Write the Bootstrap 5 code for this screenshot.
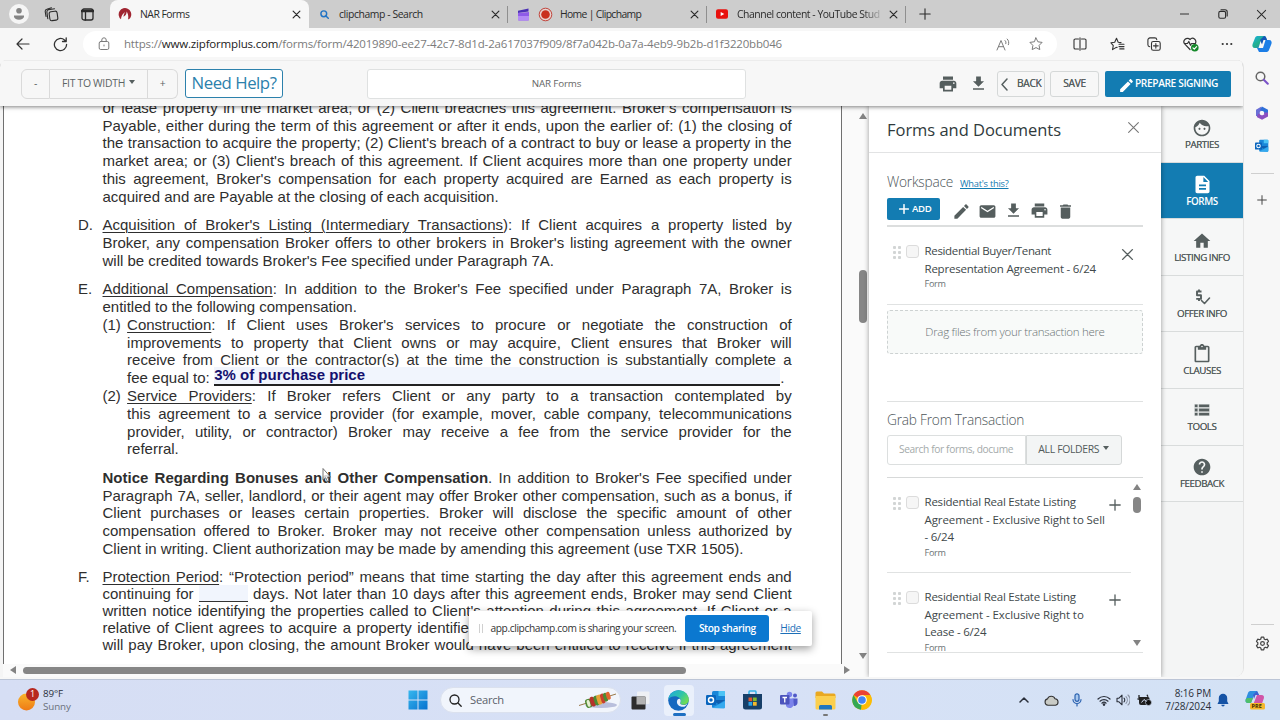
<!DOCTYPE html>
<html lang="en">
<head>
<meta charset="utf-8">
<meta name="viewport" content="width=device-width, initial-scale=1">
<title>NAR Forms</title>
<link href="https://cdn.jsdelivr.net/npm/bootstrap@5.3.0/dist/css/bootstrap.min.css" rel="stylesheet">
<style>
body{width:1280px;height:720px;overflow:hidden;font-family:"Open Sans","Noto Sans",sans-serif;font-size:10.4px;line-height:1.2;color:#333;background:#f7f7f7;white-space:nowrap}
svg{display:block;flex:none}
.ln{fill:none;stroke:currentColor;stroke-linecap:round;stroke-linejoin:round}
.cells{display:grid;align-items:center}
.cells>*{justify-self:center}
.cells>.fill{justify-self:stretch;height:100%}
.cells>.start{justify-self:start}
/* tab strip */
.tabstrip{height:28px;background:#cdcdcd;color:#2b2b2b;grid-template-columns:38px 27px 45px 199px 199px 199px 199px 37px 1fr 39px 38px 38px}
.btab{display:grid;align-items:center;grid-template-columns:30px 1fr 26px;font-size:10.4px;letter-spacing:-.42px}
.btab>svg{justify-self:center}
.btab.on{background:#f7f7f7;border-radius:8px 8px 0 0}
.btab.sep{background:linear-gradient(#8f8f8f,#8f8f8f) right 6px/1px 17px no-repeat}
.btab.rec{grid-template-columns:26px 26px 1fr 26px}
.fade-end{-webkit-mask-image:linear-gradient(90deg,#000 88%,rgba(0,0,0,.2))}
/* address row */
.addr{height:32px;background:#f7f7f7;color:#333;grid-template-columns:45px 30px 8px 974px 45px 37px 36px 37px 36px 1fr}
.pill{background:#fff;border-radius:13px;display:grid;align-items:center;grid-template-columns:41px 862px 34px 32px;font-size:11.5px;letter-spacing:-.178px;color:#7b7b7b}
.cells>.pill{height:26px}
.pill b{font-weight:400;color:#222}
.pill>svg{justify-self:center}
/* application */
.stage{height:617px}
.app{width:1244px;border-radius:7px 7px 9px 0;overflow:hidden;background:#f5f5f5;border-right:1px solid #e3e3e3}
.tool{height:46px;background:#f7f7f7;box-shadow:0 1px 4px rgba(0,0,0,.5);z-index:3;border-top:1px solid #ececec;padding-left:21px;color:#5a6363}
.zb{height:30px;border:1px solid #dadada;background:#f7f7f7;display:flex;align-items:center;justify-content:center;letter-spacing:-.3px;color:#5c6464}
.zb+.zb{border-left:0}
.help{width:98px;height:29px;border:1.5px solid #2c81ac;border-radius:3px;color:#2c81ac;background:#fff;font-size:16.8px;letter-spacing:-.48px;margin-left:7px}
.fname{width:379px;height:30px;border:1px solid #dfe1e1;border-radius:3px;background:#fff;font-size:9.8px;letter-spacing:-.16px;margin-left:84px;color:#666}
.sm-btn{height:26px;border:1px solid #d5d8d8;border-radius:3px;font-size:10.2px;letter-spacing:-.3px;color:#565f5f;text-shadow:0 0 .4px #565f5f}
.blue{background:#137cb2;color:#fff;font-weight:600;border-radius:2px}
/* document */
.docwrap{margin-left:3px;width:866px;flex:none;background:#fafafa}
.sheet{width:838.5px;height:558px;background:#fff;border-left:1px solid #707070;border-right:1.5px solid #707070;overflow:hidden;font-family:"Liberation Sans",Arial,sans-serif;font-size:15px;line-height:17.8px;color:#2e2e2e;padding-left:74px}
.blk{display:grid;grid-template-columns:24.5px 689.2px;width:714px;margin-bottom:10.65px}
.blk.first{margin-top:-7.2px}
.blk.tight{line-height:17px;margin-top:-.6px}
.sub{display:grid;grid-template-columns:24.6px 664.6px}
.j{text-align:justify;text-align-last:justify;white-space:normal;height:17.8px}
.tight .j{height:17px}
.l{height:17.8px}
u{text-decoration-thickness:1px;text-underline-offset:2px}
.field{width:566px;height:18.6px;margin:-2px 0 0 4.5px;background:#f1f5fd;border-bottom:2px solid #222;font-weight:700;color:#14106e;line-height:16px}
.mini{display:inline-block;width:49px;height:17px;background:#f1f5fd;border-bottom:1px solid #333;vertical-align:-3px}
.thumb{background:#868686;border-radius:4px}
.vsb{width:26px;height:558px}
.tri{width:0;height:0}
.tri.up{border:4.5px solid transparent;border-top:0;border-bottom:6px solid #838383}
.tri.dn{border:4.5px solid transparent;border-bottom:0;border-top:6px solid #838383}
.tri.lf{border:4.5px solid transparent;border-left:0;border-right:6px solid #838383}
.tri.rt{border:4.5px solid transparent;border-right:0;border-left:6px solid #838383}
.caret{border:3px solid transparent;border-top:4px solid #565f5f;border-bottom:0}
/* side panel */
.side{width:292px;flex:none;background:#fff;box-shadow:0 0 5px rgba(0,0,0,.4);z-index:1}
.side-head{height:46.5px;border-bottom:1px solid #e2e3e4;padding:2px 21.5px 0 18px;font-size:16.5px;letter-spacing:-.03px;color:#2f3a3c}
.inner{padding:0 18px}
.h-light{font-weight:300;font-size:13.7px;letter-spacing:-.22px;color:#4c5558;line-height:18px}
.addb{width:52.5px;height:22px;font-size:9.6px;letter-spacing:-.35px}
.ico{color:#555e5e}
.entry{display:grid;grid-template-columns:19px 18.5px 1fr auto;font-size:11.5px;letter-spacing:-.22px;line-height:17.7px;color:#40484a;width:256px}
.entry .f{font-size:9.1px;line-height:13px;color:#6a7274;letter-spacing:-.3px}
.entry .wide{letter-spacing:-.09px}
.entry .slim{letter-spacing:-.34px}
.box{width:13px;height:13px;border:1px solid #dcdcdc;border-radius:3px;background:#f6f6f6;margin-top:2.5px}
.dots{width:9px;height:14px;margin:2.5px 0 0 5px;background:radial-gradient(circle,#d2d5d5 1.3px,transparent 1.8px) 0 0/5px 5px}
.drop{height:44px;border:1.5px dashed #cdd2d2;border-radius:3px;background:#f8faf9;font-weight:300;font-size:11.5px;letter-spacing:-.29px;color:#6a7274}
.find{width:139px;height:30px;border:1px solid #dcdfdf;border-radius:3px 0 0 3px;padding-left:11px;font-size:10.2px;letter-spacing:-.38px;color:#a4aaaa;background:#fff}
.folders{width:95.5px;height:30px;border:1px solid #d5d8d8;background:#f3f5f5;border-radius:0 3px 3px 0;letter-spacing:-.32px;color:#525b5b}
.picks{height:176px;border-top:1.5px solid #d7d9d9;border-bottom:1px solid #e0e2e2;overflow:hidden}
/* rail */
.rail{width:82px;flex:none;background:#f4f5f5}
.tile{height:56.6px;border-bottom:1px solid #d9dcdc;background:#f6f7f7;display:flex;flex-direction:column;align-items:center;padding-top:11.5px;font-size:9.8px;letter-spacing:-.46px;color:#565f5f;gap:1px;text-shadow:0 0 .5px #565f5f}
.tile.on{background:#137cb2;color:#fff;font-weight:600;text-shadow:none}
/* browser sidebar */
.edgebar{width:36px;color:#444;display:grid;justify-items:center;align-items:center;grid-template-rows:36px 33px 34px 20px 34px 1fr 36px 16px}
.rule{width:23px;height:1px;background:#cfcfcf}
/* screen-share notice */
.share{position:absolute;left:468.5px;top:610.5px;width:343px;height:35.5px;background:#fff;border-radius:2px;box-shadow:0 3px 9px rgba(0,0,0,.38);font-size:10.2px;letter-spacing:-.39px;color:#333;padding-left:10px;z-index:5}
.stop{width:84px;height:26.5px;background:#0b78d0;color:#fff;border-radius:3px;font-weight:600;margin-left:9px}
.cursor{position:absolute;left:321px;top:467px;z-index:4}
/* taskbar */
.taskbar{height:41px;background:linear-gradient(90deg,#d6def4,#d7e1f6 60%,#d3e2f5);border-top:1px solid #bcc5d6;grid-template-columns:43px 357px 36px 185px 39px 37px 37px 36px 37px 37px 36px 127px 34px 20px 32px 22px 16px 26px 54px 24px 1fr;color:#2a2f3a;margin-top:2px}
.srch{width:181px;height:25.5px;background:#f1f5fc;border:1px solid #dbe1ee;border-radius:13px;padding:0 2px 0 8px;font-size:11.2px;letter-spacing:-.24px;color:#5a5f6a}
.under{width:13px;height:2.5px;border-radius:2px;background:#1e6fc2;position:absolute;bottom:0;left:9px}
.edgebtn{position:relative;width:30px;height:31px;background:#eaf0fb;border-radius:4px}
</style>
</head>
<body>
<svg width="0" height="0" style="position:absolute">
<defs>
<symbol id="print" viewBox="0 0 24 24"><path fill="currentColor" d="M19 8H5c-1.66 0-3 1.34-3 3v6h4v4h12v-4h4v-6c0-1.66-1.34-3-3-3zm-3 11H8v-5h8v5zm3-7c-.55 0-1-.45-1-1s.45-1 1-1 1 .45 1 1-.45 1-1 1zm-1-9H6v4h12V3z"/></symbol>
<symbol id="down" viewBox="0 0 24 24"><path fill="currentColor" d="M19 9h-4V3H9v6H5l7 7 7-7zM5 18v2h14v-2H5z"/></symbol>
<symbol id="edit" viewBox="0 0 24 24"><path fill="currentColor" d="M3 17.25V21h3.75L17.81 9.94l-3.75-3.75L3 17.25zM20.71 7.04c.39-.39.39-1.02 0-1.41l-2.34-2.34c-.39-.39-1.02-.39-1.41 0l-1.83 1.83 3.75 3.75 1.83-1.83z"/></symbol>
<symbol id="x" viewBox="0 0 12 12"><path class="ln" d="M1.5 1.5l9 9M10.5 1.5l-9 9"/></symbol>
<symbol id="plus" viewBox="0 0 12 12"><path class="ln" d="M6 .8v10.4M.8 6h10.4"/></symbol>
<symbol id="outlook" viewBox="0 0 20 20"><rect x="6" y="1" width="13" height="17" rx="1.5" fill="#1a86d8"/><path fill="#4cc3f5" d="M12.500 1H18a1 1 0 0 1 1 1v4h-6.500z"/><path fill="#0f5fb0" d="M6 10l13 0-6.500 4z"/><path fill="#35a9ee" d="M6 18l13-7v6a1.500 1.500 0 0 1-1.500 1.500z"/><rect x="0" y="5" width="10" height="10" rx="1.200" fill="#0a65bd"/><circle cx="5" cy="10" r="2.500" fill="none" stroke="#fff" stroke-width="1.500"/></symbol>
<linearGradient id="cb" x1="0" y1="0" x2="1" y2="1"><stop offset="0" stop-color="#19b0e8"/><stop offset=".5" stop-color="#22b08a"/><stop offset="1" stop-color="#2a6fe8"/></linearGradient>
</defs>
</svg>

<header class="tabstrip cells">
  <svg width="20" height="20" viewBox="0 0 20 20"><circle cx="10" cy="10" r="10" fill="#f5f5f5"/><circle cx="10" cy="6.700" r="2.800" fill="#858585"/><path d="M5 11.500h10v1c0 2-2.200 3.200-5 3.200s-5-1.200-5-3.200z" fill="#858585"/></svg>
  <svg width="15" height="15" viewBox="0 0 15 15" class="ln" stroke-width="1.100"><rect x="5.500" y="4.500" width="8" height="9" rx="2" transform="rotate(-8 9 9)"/><path d="M3.800 11.800L2.900 5a2 2 0 0 1 1.600-2.200l6-1M2 9.500L1.200 4.500A2 2 0 0 1 2.800 2.300L7.500.8"/></svg>
  <svg width="13" height="13" viewBox="0 0 13 13" class="ln" stroke-width="1.300"><rect x="1" y="1" width="11" height="11" rx="2"/><path d="M1 3h11" stroke-width="2.600"/><path d="M4.500 3v9"/></svg>
  <div class="btab on fill"><svg width="14" height="14" viewBox="0 0 14 14"><path fill="#a02531" d="M3 12.300A6.300 6.300 0 1 1 12.900 9.500c-.4 1.600-1.400 2.600-2.900 3 .6-2.500.3-5.200-1.300-8-.2 2.800-1 4.200-3.200 5.200.1-1.400.6-3 1.600-4.600C4.600 6.800 3.200 9 3 12.300z"/></svg><span style="letter-spacing:-.5px">NAR Forms</span><svg width="9" height="9" stroke-width="1.600"><use href="#x"/></svg></div>
  <div class="btab sep fill"><svg width="9" height="9" viewBox="0 0 10 10" class="ln" style="color:#2173c4" stroke-width="1.600"><circle cx="4.200" cy="4.200" r="3.200"/><path d="M6.600 6.600L9.200 9.200"/></svg><span>clipchamp - Search</span><svg width="9" height="9" stroke-width="1.600"><use href="#x"/></svg></div>
  <div class="btab sep rec fill"><svg width="13" height="13" viewBox="0 0 13 13" style="margin-left:4px"><path fill="#4a2fb5" d="M1 2.800L11.500.5v3L1 5z"/><path fill="#8f5be8" d="M1 5l11-1v7.500a1 1 0 0 1-1 1H2a1 1 0 0 1-1-1z"/><path fill="#b48bf5" d="M1 8h11v3.500a1 1 0 0 1-1 1H2a1 1 0 0 1-1-1z"/></svg><svg width="15" height="15" viewBox="0 0 15 15" class="me-1"><circle cx="7.500" cy="7.500" r="6.300" fill="#e6d3d1" stroke="#c1443b" stroke-width="1"/><circle cx="7.500" cy="7.500" r="4.300" fill="#c9301f"/></svg><span style="letter-spacing:-.66px">Home | Clipchamp</span><svg width="9" height="9" stroke-width="1.600"><use href="#x"/></svg></div>
  <div class="btab sep fill"><svg width="12" height="10" viewBox="0 0 12 10"><rect width="12" height="9.500" y=".2" rx="2" fill="#e8110e"/><path fill="#fff" d="M4.700 2.900v4.200L8.300 5z"/></svg><span class="fade-end" style="letter-spacing:-.45px">Channel content - YouTube Stud</span><svg width="9" height="9" stroke-width="1.600"><use href="#x"/></svg></div>
  <svg width="12" height="12" stroke-width="1.100"><use href="#plus"/></svg>
  <span></span>
  <svg width="9" height="2"><path d="M0 1h9" stroke="#333"/></svg>
  <svg width="10" height="10" viewBox="0 0 10 10" class="ln" stroke-width="1.100"><rect x=".8" y="2.400" width="6.800" height="6.800" rx="1.500"/><path d="M3 .8h4a2.200 2.200 0 0 1 2.200 2.200v4"/></svg>
  <svg width="11" height="11" stroke-width="1.100"><use href="#x"/></svg>
</header>

<div class="addr cells">
  <svg width="14" height="12" viewBox="0 0 14 12" class="ln" stroke-width="1.200"><path d="M13 6H1M6 1L1 6l5 5"/></svg>
  <svg width="15" height="15" viewBox="0 0 15 15" class="ln" stroke-width="1.300"><path d="M13.600 7.500A6.100 6.100 0 1 1 11.500 2.900L13 4.300M13.200.8v3.700H9.500"/></svg>
  <span></span>
  <div class="pill fill">
    <svg width="12" height="14" viewBox="0 0 12 14" class="ln" stroke-width="1"><rect x="1.200" y="4.500" width="9.600" height="8" rx="1.500"/><path d="M3.800 4.500V3a2.200 2.200 0 0 1 4.400 0v1.500M6 8v1"/></svg>
    <span>https://<b>www.zipformplus.com</b>/forms/form/42019890-ee27-42c7-8d1d-2a617037f909/8f7a042b-0a7a-4eb9-9b2b-d1f3220bb046</span>
    <svg width="14" height="13" viewBox="0 0 14 13" class="ln" stroke-width="1"><path d="M1 12L5 2.500 9 12M2.500 8.700h5M9 2.500c1 .8 1.200 2 .8 3.200M11.200 1c1.600 1.500 1.900 3.700 1.200 5.700"/></svg>
    <svg width="14" height="14" viewBox="0 0 14 14" class="ln" stroke-width="1"><path d="M7 .9l1.900 3.900 4.200.6-3 3 .7 4.200L7 10.600l-3.800 2 .7-4.200-3-3 4.200-.6z"/></svg>
  </div>
  <svg width="14" height="14" viewBox="0 0 14 14" class="ln" stroke-width="1.100"><path d="M5.500 2H2.300A1.300 1.300 0 0 0 1 3.300v7.400A1.300 1.300 0 0 0 2.300 12h3.200M8.500 2h3.200A1.300 1.300 0 0 1 13 3.300v7.400a1.300 1.300 0 0 1-1.300 1.300H8.500M7 .8v12.400"/></svg>
  <svg width="15" height="14" viewBox="0 0 15 14" class="ln" stroke-width="1.100" style="margin-right:6px"><path d="M7.200 10.300L5.800 10.600 2.500 12.600l.8-3.900L1 5.800l3.700-.6L6.500 1.300l1.700 3.900 2.800.4M9 7.300h5M9 9.600h5M9.800 11.900H14"/></svg>
  <svg width="14" height="14" viewBox="0 0 14 14" class="ln" stroke-width="1.100" style="margin-right:6px"><rect x="4.500" y="4.500" width="8.700" height="8.700" rx="1.800"/><path d="M2.800 9.800A2 2 0 0 1 .9 7.800V3A2.100 2.100 0 0 1 3 .9h4.800a2 2 0 0 1 2 1.800M8.850 6.500v4.600M6.500 8.850h4.700"/></svg>
  <svg width="16" height="15" viewBox="0 0 16 15" class="ln" stroke-width="1.200" style="margin-right:6px"><path d="M7 12.500L1.900 7.200A3.300 3.300 0 0 1 7 2.500 3.300 3.300 0 0 1 12 7M1.500 6.500h3l1.300-2 1.700 3.800 1-1.800h3"/><circle cx="11.800" cy="10.800" r="3.800" fill="#15892a" stroke="none"/><path d="M10 10.900l1.300 1.200 2.300-2.400" stroke="#fff"/></svg>
  <svg width="12" height="4" viewBox="0 0 12 4" fill="#333" style="margin-right:7px"><circle cx="1.700" cy="2" r="1.100"/><circle cx="6" cy="2" r="1.100"/><circle cx="10.300" cy="2" r="1.100"/></svg>
  <svg width="20" height="18" viewBox="0 0 20 18" style="margin-right:4px"><path d="M6 1h7l2 4H9L6.500 13H3C.5 13 0 11 .6 9L3 3C3.600 1.500 4.500 1 6 1z" fill="url(#cb)"/><path d="M14 17H7l-2-4h6L13.500 5H17c2.500 0 3 2 2.400 4L17 15c-.6 1.500-1.500 2-3 2z" fill="#1c7ee6"/><path d="M12 1c2 0 2 1 3 4h-3.500L10 9.500 8 5z" fill="#1356b8"/></svg>
</div>

<div class="stage d-flex">
  <div class="app d-flex flex-column flex-shrink-0">
    <div class="tool d-flex align-items-center position-relative">
      <div class="zb rounded-start" style="width:29px">-</div><div class="zb" style="width:98px">FIT TO WIDTH <span class="caret ms-1 mb-1"></span></div><div class="zb rounded-end" style="width:30px">+</div>
      <div class="help d-flex align-items-center justify-content-center">Need Help?</div>
      <div class="fname d-flex align-items-center justify-content-center">NAR Forms</div>
      <svg class="ico" width="20" height="20" style="margin-left:192px"><use href="#print"/></svg>
      <svg class="ico" width="19" height="19" style="margin-left:11px"><use href="#down"/></svg>
      <div class="sm-btn d-flex align-items-center" style="width:48px;margin-left:9px;padding-left:3px"><svg width="7" height="13" viewBox="0 0 7 13" class="ln" stroke-width="1.500" style="margin:2px 9px 0 0"><path d="M6 1L1 6.500 6 12"/></svg>BACK</div>
      <div class="sm-btn d-flex align-items-center justify-content-center" style="width:49px;margin-left:5px">SAVE</div>
      <div class="blue d-flex align-items-center" style="width:126px;height:26px;margin-left:6px;padding-left:13px;font-size:10.2px;letter-spacing:-.39px"><svg width="17" height="17" style="margin-top:3px"><use href="#edit"/></svg>PREPARE SIGNING</div>
    </div>

    <div class="d-flex flex-grow-1">
      <main class="docwrap">
        <div class="d-flex">
          <article class="sheet">
            <div class="blk first"><span></span><div>
              <div class="j">or lease property in the market area; or (2) Client breaches this agreement. Broker's compensation is</div>
              <div class="j">Payable, either during the term of this agreement or after it ends, upon the earlier of: (1) the closing of</div>
              <div class="j">the transaction to acquire the property; (2) Client's breach of a contract to buy or lease a property in the</div>
              <div class="j">market area; or (3) Client's breach of this agreement. If Client acquires more than one property under</div>
              <div class="j">this agreement, Broker's compensation for each property acquired are Earned as each property is</div>
              <div class="l">acquired and are Payable at the closing of each acquisition.</div>
            </div></div>
            <div class="blk"><span>D.</span><div>
              <div class="j"><u>Acquisition of Broker's Listing (Intermediary Transactions</u>): If Client acquires a property listed by</div>
              <div class="j">Broker, any compensation Broker offers to other brokers in Broker's listing agreement with the owner</div>
              <div class="l">will be credited towards Broker's Fee specified under Paragraph 7A.</div>
            </div></div>
            <div class="blk"><span>E.</span><div>
              <div class="j"><u>Additional Compensation</u>: In addition to the Broker's Fee specified under Paragraph 7A, Broker is</div>
              <div class="l">entitled to the following compensation.</div>
              <div class="sub"><span>(1)</span><div>
                <div class="j"><u>Construction</u>: If Client uses Broker's services to procure or negotiate the construction of</div>
                <div class="j">improvements to property that Client owns or may acquire, Client ensures that Broker will</div>
                <div class="j">receive from Client or the contractor(s) at the time the construction is substantially complete a</div>
                <div class="l d-flex">fee equal to:<div class="field">3% of purchase price</div>.</div>
              </div></div>
              <div class="sub"><span>(2)</span><div>
                <div class="j"><u>Service Providers</u>: If Broker refers Client or any party to a transaction contemplated by</div>
                <div class="j">this agreement to a service provider (for example, mover, cable company, telecommunications</div>
                <div class="j">provider, utility, or contractor) Broker may receive a fee from the service provider for the</div>
                <div class="l">referral.</div>
              </div></div>
            </div></div>
            <div class="blk"><span></span><div>
              <div class="j"><b>Notice Regarding Bonuses and Other Compensation</b>. In addition to Broker's Fee specified under</div>
              <div class="j">Paragraph 7A, seller, landlord, or their agent may offer Broker other compensation, such as a bonus, if</div>
              <div class="j">Client purchases or leases certain properties. Broker will disclose the specific amount of other</div>
              <div class="j">compensation offered to Broker. Broker may not receive other compensation unless authorized by</div>
              <div class="l">Client in writing. Client authorization may be made by amending this agreement (use TXR 1505).</div>
            </div></div>
            <div class="blk tight"><span>F.</span><div>
              <div class="j"><u>Protection Period</u>: “Protection period” means that time starting the day after this agreement ends and</div>
              <div class="j">continuing for <span class="mini"></span> days. Not later than 10 days after this agreement ends, Broker may send Client</div>
              <div class="j">written notice identifying the properties called to Client's attention during this agreement. If Client or a</div>
              <div class="j">relative of Client agrees to acquire a property identified in the notice, either party or the owner, Client</div>
              <div class="j">will pay Broker, upon closing, the amount Broker would have been entitled to receive if this agreement</div>
            </div></div>
          </article>
          <div class="vsb d-flex flex-column align-items-center" style="padding:6.500px 0 5px 17px">
            <span class="tri up"></span><span class="thumb" style="width:7.500px;height:53px;margin-top:151px"></span><span class="tri dn mt-auto"></span>
          </div>
        </div>
        <div class="d-flex align-items-center" style="height:12px;padding-left:7px">
          <span class="tri lf"></span><span class="thumb" style="width:663px;height:7px;margin-left:7px"></span><span class="tri rt" style="margin-left:158px"></span>
        </div>
      </main>

      <aside class="side position-relative">
        <div class="side-head d-flex align-items-center justify-content-between">Forms and Documents<svg width="13" height="13" stroke-width="1" style="color:#777;margin-top:-5px"><use href="#x"/></svg></div>
        <div class="inner">
          <div class="d-flex align-items-baseline" style="padding-top:20px;height:46px"><span class="h-light">Workspace</span><a href="#" style="font-size:9.300px;letter-spacing:-.247px;color:#137cb2;margin-left:7px">What's this?</a></div>
          <div class="d-flex align-items-center ico" style="height:28px;border-bottom:2px solid #dcdede;padding-bottom:5px">
            <div class="blue addb d-flex align-items-center"><svg width="10" height="10" style="margin:0 3px 0 12px" stroke-width="1.800"><use href="#plus"/></svg>ADD</div>
            <svg width="19" height="19" style="margin:5px 0 0 12px"><use href="#edit"/></svg>
            <svg width="19" height="19" viewBox="0 0 24 24" style="margin:5px 0 0 7px"><path fill="currentColor" d="M20 4H4c-1.100 0-1.990.9-1.990 2L2 18c0 1.100.9 2 2 2h16c1.100 0 2-.9 2-2V6c0-1.100-.9-2-2-2zm0 4l-8 5-8-5V6l8 5 8-5v2z"/></svg>
            <svg width="19" height="19" style="margin:2px 0 0 7px"><use href="#down"/></svg>
            <svg width="19" height="19" style="margin:2px 0 0 7px"><use href="#print"/></svg>
            <svg width="19" height="19" viewBox="0 0 24 24" style="margin:5px 0 0 7px"><path fill="currentColor" d="M6 19c0 1.100.9 2 2 2h8c1.100 0 2-.9 2-2V7H6v12zM19 4h-3.500l-1-1h-5l-1 1H5v2h14V4z"/></svg>
          </div>
          <div class="entry" style="padding-top:15.500px;height:78px;border-bottom:1px solid #e0e2e2">
            <span class="dots"></span><span class="box"></span><div><span class="slim">Residential Buyer/Tenant</span><br>Representation Agreement - 6/24<div class="f">Form</div></div><svg class="ico" width="13" height="13" stroke-width="1.300" style="margin:6px 9.500px 0 0"><use href="#x"/></svg>
          </div>
          <div class="drop d-flex align-items-center justify-content-center" style="margin-top:5px">Drag files from your transaction here</div>
          <div class="h-light" style="margin-top:47px;border-top:1px solid #dfe1e1;padding-top:9.500px;height:34px">Grab From Transaction</div>
          <div class="d-flex"><div class="find d-flex align-items-center">Search for forms, docume</div><div class="folders d-flex align-items-center justify-content-center">ALL FOLDERS <span class="caret ms-1 mb-1"></span></div></div>
          <div class="picks d-flex" style="margin-top:12px">
            <div style="width:244px">
              <div class="entry w-100" style="padding-top:15.500px;height:95.500px;border-bottom:1px solid #e0e2e2"><span class="dots"></span><span class="box"></span><div>Residential Real Estate Listing<br><span class="wide">Agreement - Exclusive Right to Sell</span><br>- 6/24<div class="f">Form</div></div><svg class="ico" width="12" height="12" stroke-width="1.300" style="margin:6px 10px 0 0"><use href="#plus"/></svg></div>
              <div class="entry w-100" style="padding-top:15px"><span class="dots"></span><span class="box"></span><div>Residential Real Estate Listing<br><span class="wide">Agreement - Exclusive Right to</span><br>Lease - 6/24<div class="f">Form</div></div><svg class="ico" width="12" height="12" stroke-width="1.300" style="margin:6px 10px 0 0"><use href="#plus"/></svg></div>
            </div>
            <div class="d-flex flex-column align-items-center" style="width:12px;padding:6px 0 6px"><span class="tri up"></span><span class="thumb" style="width:8px;height:16px;margin-top:7px"></span><span class="tri dn mt-auto"></span></div>
          </div>
        </div>
      </aside>

      <nav class="rail">
        <div class="tile"><svg width="20" height="20" viewBox="0 0 24 24" fill="currentColor"><path d="M9 11.750c-.69 0-1.250.56-1.250 1.250s.56 1.250 1.250 1.250 1.250-.56 1.250-1.250-.56-1.250-1.250-1.250zm6 0c-.69 0-1.250.56-1.250 1.250s.56 1.250 1.250 1.250 1.250-.56 1.250-1.250-.56-1.250-1.250-1.250zM12 2C6.480 2 2 6.480 2 12s4.480 10 10 10 10-4.480 10-10S17.520 2 12 2zm0 18c-4.410 0-8-3.590-8-8 0-.29.02-.58.05-.86 2.360-1.050 4.230-2.980 5.210-5.370C11.070 8.330 14.050 10 17.420 10c.78 0 1.530-.09 2.250-.26.21.71.33 1.470.33 2.260 0 4.410-3.590 8-8 8z"/></svg>PARTIES</div>
        <div class="tile on"><svg width="21" height="21" viewBox="0 0 24 24" fill="currentColor"><path d="M14 2H6c-1.100 0-1.990.9-1.990 2L4 20c0 1.100.89 2 1.990 2H18c1.100 0 2-.9 2-2V8l-6-6zm2 16H8v-2h8v2zm0-4H8v-2h8v2zm-3-5V3.500L18.500 9H13z"/></svg>FORMS</div>
        <div class="tile"><svg width="20" height="20" viewBox="0 0 24 24" fill="currentColor"><path d="M10 20v-6h4v6h5v-8h3L12 3 2 12h3v8z"/></svg>LISTING INFO</div>
        <div class="tile"><svg width="20" height="20" viewBox="0 0 20 20" class="ln" stroke-width="1.900"><path d="M9.500 4.500H5v3.700h4v3.700H4.200M7 2.500v2M7 11.900v2" stroke-linecap="butt"/><path d="M9.500 13.500l3 3 5-5.500" stroke-width="1.600"/></svg>OFFER INFO</div>
        <div class="tile"><svg width="20" height="20" viewBox="0 0 24 24" fill="currentColor"><path d="M19 2h-4.180C14.400.84 13.300 0 12 0c-1.300 0-2.400.84-2.820 2H5c-1.100 0-2 .9-2 2v16c0 1.100.9 2 2 2h14c1.100 0 2-.9 2-2V4c0-1.100-.9-2-2-2zm-7 0c.55 0 1 .45 1 1s-.45 1-1 1-1-.45-1-1 .45-1 1-1zm7 18H5V4h2v3h10V4h2v16z"/></svg>CLAUSES</div>
        <div class="tile"><svg width="20" height="20" viewBox="0 0 24 24" fill="currentColor"><path d="M3 14h4v-4H3v4zm0 5h4v-4H3v4zM3 9h4V5H3v4zm5 5h13v-4H8v4zm0 5h13v-4H8v4zM8 5v4h13V5H8z" stroke="#f6f7f7" stroke-width=".5"/></svg>TOOLS</div>
        <div class="tile"><svg width="20" height="20" viewBox="0 0 24 24" fill="currentColor"><path d="M12 2C6.480 2 2 6.480 2 12s4.480 10 10 10 10-4.480 10-10S17.520 2 12 2zm1 17h-2v-2h2v2zm2.070-7.750l-.9.920C13.450 12.900 13 13.500 13 15h-2v-.5c0-1.100.45-2.100 1.170-2.830l1.240-1.260c.37-.36.59-.86.59-1.410 0-1.100-.9-2-2-2s-2 .9-2 2H8c0-2.210 1.790-4 4-4s4 1.790 4 4c0 .88-.36 1.680-.93 2.250z"/></svg>FEEDBACK</div>
      </nav>
    </div>
  </div>

  <div class="edgebar">
    <svg width="14" height="14" viewBox="0 0 14 14" class="ln" stroke-width="1.500" style="color:#666"><circle cx="5.500" cy="5.500" r="4.300"/><path d="M8.800 8.800l4 4" stroke="#7a52c8" stroke-width="2"/></svg>
    <svg width="14" height="14" viewBox="0 0 14 14" fill="none" stroke-width="3.800"><path d="M2.900 10V4.800L7 2.400" stroke="#6a6fd6"/><path d="M6 2.300L11.100 5v3" stroke="#2f6fd8"/><path d="M11.100 6.500V9.300L7 11.600 2.600 9.300" stroke="#8a4fc0"/><circle cx="7" cy="7" r="2.100" fill="#f7f7f7" stroke="none"/></svg>
    <svg width="14" height="14"><use href="#outlook"/></svg>
    <span class="rule"></span>
    <svg width="10" height="10" stroke-width="1.200"><use href="#plus"/></svg>
    <span class="rule align-self-end"></span>
    <svg width="15" height="15" viewBox="0 0 16 16" class="ln" stroke-width="1.300"><circle cx="8" cy="8" r="2"/><path d="M6.700 1.200h2.600l.5 2 1.300.8 2-.6 1.300 2.300L13 7.200v1.600l1.400 1.500-1.300 2.300-2-.6-1.300.8-.5 2H6.700l-.5-2-1.300-.8-2 .6-1.300-2.300L3 8.800V7.200L1.600 5.700l1.300-2.300 2 .6 1.300-.8z"/></svg>
    <span></span>
  </div>
</div>

<footer class="taskbar cells">
  <div class="position-relative" style="width:22px;height:24px;margin-left:14px"><svg width="23" height="24" viewBox="0 0 23 24"><defs><linearGradient id="sun" x2="0" y2="1"><stop stop-color="#f9b52c"/><stop offset="1" stop-color="#ee7a16"/></linearGradient></defs><circle cx="8.500" cy="14" r="8.500" fill="url(#sun)"/><circle cx="14.500" cy="6.500" r="6.500" fill="#b7281f"/></svg><span class="position-absolute text-white" style="left:12.500px;top:1px;font-size:9px">1</span></div>
  <div class="start" style="font-size:9.800px;letter-spacing:-.1px;line-height:13.300px">89°F<br><span style="color:#6a6f7b">Sunny</span></div>
  <svg width="20" height="20" viewBox="0 0 20 20"><defs><linearGradient id="win" x2="1" y2="1"><stop stop-color="#36b7ee"/><stop offset="1" stop-color="#0872cf"/></linearGradient></defs><path fill="url(#win)" d="M.5.500h9v9h-9zM10.500.5h9v9h-9zM.5 10.500h9v9h-9zM10.500 10.500h9v9h-9z"/></svg>
  <div class="srch start d-flex align-items-center" style="margin-left:4px"><svg width="13" height="13" viewBox="0 0 13 13" class="ln" style="color:#222;margin-right:8px" stroke-width="1.300"><circle cx="5.500" cy="5.500" r="4.500"/><path d="M9 9l3.200 3.200"/></svg>Search
    <svg class="ms-auto" width="40" height="20" viewBox="0 0 40 20"><ellipse cx="23" cy="15" rx="16" ry="3" fill="#b9bfdc"/><path d="M1 15.500L38 4" stroke="#9a7a4a" stroke-width="1"/><g transform="rotate(-17 20 10)"><rect x="7" y="6" width="6" height="9" rx="2.500" fill="#4f8a35"/><rect x="8.500" y="7" width="3" height="7" rx="1.500" fill="#e7efd0"/><rect x="12" y="5" width="5" height="10" rx="2.500" fill="#b5332a"/><rect x="16" y="5" width="5" height="10" rx="2.500" fill="#4b8b34"/><rect x="19" y="5" width="5" height="10" rx="2" fill="#e8a23a"/><rect x="23" y="5" width="4" height="10" rx="2" fill="#c8402e"/><rect x="26" y="5" width="4" height="9" rx="2" fill="#4b8b34"/><rect x="29" y="5" width="4" height="8" rx="2" fill="#e0642e"/></g></svg></div>
  <svg width="19" height="19" viewBox="0 0 19 19"><rect x="6" y=".5" width="12.500" height="12.500" rx="1" fill="#eef0f4"/><rect x=".5" y="5.500" width="14" height="13" rx="1" fill="#2d2d2d"/><rect x="5.500" y="5.500" width="9" height="8" fill="#b3b3b3"/></svg>
  <div class="edgebtn d-flex align-items-center justify-content-center"><svg width="21" height="21" viewBox="0 0 20 20"><defs><linearGradient id="eg" x2="1" y2=".6"><stop stop-color="#1fa6e0"/><stop offset=".6" stop-color="#2fc4a8"/><stop offset="1" stop-color="#6fdc56"/></linearGradient></defs><circle cx="10" cy="10" r="9.800" fill="#1668c0"/><path fill="url(#eg)" d="M.3 9C1.200 3.500 5 .2 10 .2c5.500 0 9.800 4 9.800 8.800 0 3-2.300 5-5 5-2.500 0-3.500-1-3-2 .8-1 1-3-.8-4.500C8 5 2.500 5.500.3 9z"/><path fill="#eaf0fb" d="M11.500 8.500c.9 1.200.7 2.500.2 3.300-.6 1.200.8 2.400 3 2.400 1.800 0 3.300-.8 4-1.700-.8 2-2.500 3.500-4.500 3.500-4 0-6.500-3-5.500-6 .5-1.500 1.800-2.200 2.800-1.500z"/></svg><span class="under"></span></div>
  <svg width="20" height="20"><use href="#outlook"/></svg>
  <svg width="19" height="20" viewBox="0 0 19 20"><path d="M6 4V1.800A1 1 0 0 1 7 1h5a1 1 0 0 1 1 .8V4" fill="none" stroke="#35b3e8" stroke-width="1.500"/><path fill="#173f68" d="M0 4h19v13a2.500 2.500 0 0 1-2.500 2.500h-14A2.500 2.500 0 0 1 0 17z"/><path fill="#e2552c" d="M5.500 7.500h3.700v3.700H5.500z"/><path fill="#7fba2c" d="M10 7.500h3.700v3.700H10z"/><path fill="#2aa3e8" d="M5.500 12h3.700v3.700H5.500z"/><path fill="#f4b82a" d="M10 12h3.700v3.700H10z"/></svg>
  <svg width="19" height="18" viewBox="0 0 19 18"><circle cx="10.500" cy="3.500" r="2.700" fill="#7b83eb"/><circle cx="16" cy="4.500" r="2" fill="#5059c9"/><path d="M13.500 7.500h5v4.500a3 3 0 0 1-4 2.700z" fill="#5059c9"/><path d="M7 7.500h7.500v5.500a4 4 0 0 1-7.500 2z" fill="#7b83eb"/><rect x="1" y="4" width="9.500" height="9.500" rx="1" fill="#4b53bc"/><path d="M3.500 6.500H8M5.750 6.500v5" stroke="#fff" stroke-width="1.300"/></svg>
  <div class="position-relative"><svg width="21" height="19" viewBox="0 0 21 19"><path fill="#e9a821" d="M.5 2A1.500 1.500 0 0 1 2 .5h5l2 2h10A1.500 1.500 0 0 1 20.500 4v3H.5z"/><path fill="#fbcf4e" d="M.5 5h20v12a1.500 1.500 0 0 1-1.500 1.500H2A1.500 1.500 0 0 1 .5 17z"/><path fill="#2077bf" d="M4 18.500v-3a1.500 1.500 0 0 1 1.500-1.500h10a1.500 1.500 0 0 1 1.500 1.500v3z"/></svg><span class="position-absolute" style="left:8px;bottom:-6px;width:5px;height:2px;border-radius:2px;background:#777"></span></div>
  <svg width="20" height="20" viewBox="0 0 20 20"><circle cx="10" cy="10" r="9.800" fill="#fbbc05"/><path fill="#ea4335" d="M10 10L1.500 5.100A9.800 9.800 0 0 1 18.500 5.200H10z"/><path fill="#34a853" d="M10 10l-1 9.750A9.800 9.800 0 0 1 1.500 5.100l4.300 7.300z"/><path fill="#fbbc05" d="M10 5.200h8.500A9.800 9.800 0 0 1 9.500 19.800l4.700-7.400z"/><circle cx="10" cy="10" r="4.800" fill="#fff"/><circle cx="10" cy="10" r="3.800" fill="#4285f4"/></svg>
  <span></span>
  <svg width="10" height="6" viewBox="0 0 10 6" class="ln" stroke-width="1.500"><path d="M1 5l4-4 4 4"/></svg>
  <svg width="15" height="11" viewBox="0 0 15 11"><path d="M4 10.200a3.200 3.200 0 0 1-.5-6.300A4 4 0 0 1 11 3.700a3.300 3.300 0 0 1 .5 6.500z" fill="#c9cbc6" stroke="#333" stroke-width="1.100"/></svg>
  <svg width="10" height="14" viewBox="0 0 10 14" class="ln" stroke-width="1.200" style="color:#2a62b0"><rect x="3" y=".8" width="4" height="7.500" rx="2" fill="#a9c8ee"/><path d="M1 6.500a4 4 0 0 0 8 0M5 10.500V13"/></svg>
  <svg width="14" height="11" viewBox="0 0 14 11" class="ln" stroke-width="1.200"><path d="M1 4a8.500 8.500 0 0 1 12 0M3 6.200a5.700 5.700 0 0 1 8 0M4.900 8.200a3 3 0 0 1 4.200 0"/><circle cx="7" cy="9.600" r=".7" fill="#222"/></svg>
  <svg width="14" height="12" viewBox="0 0 14 12" class="ln" stroke-width="1.100"><path d="M1 4.200h2L6 1.200v9.600l-3-3H1zM8 4.200a2.500 2.500 0 0 1 0 3.600"/><path d="M10 2.600a5 5 0 0 1 0 6.800M12 1a7 7 0 0 1 0 10" stroke="#8b93a3"/></svg>
  <svg width="15" height="12" viewBox="0 0 15 12"><path d="M2 3h9a1.500 1.500 0 0 1 1.500 1.500v5A1.500 1.500 0 0 1 11 11H4a2 2 0 0 1-2-2z" fill="#222"/><path d="M.5 5h3M2 1v3M10 .8l1 2" stroke="#222" stroke-width="1.300"/><circle cx="11.500" cy="8.500" r="3" fill="#111" stroke="#d5e0f5" stroke-width=".6"/><path d="M4.500 8.500l2.500-3 2.500 2" stroke="#d5e0f5" fill="none"/></svg>
  <div class="text-end" style="justify-self:end;font-size:10px;letter-spacing:-.17px;line-height:13px">8:16 PM<br>7/28/2024</div>
  <svg width="12" height="14" viewBox="0 0 12 14" fill="#1553a5"><path d="M6 .8a4.200 4.200 0 0 1 4.200 4.200v3.200L11.500 11H.5l1.300-2.800V5A4.200 4.200 0 0 1 6 .8zM4.300 11.800h3.400a1.700 1.700 0 0 1-3.400 0z"/></svg>
  <svg width="20" height="20" viewBox="0 0 20 20" style="margin-right:6px"><path d="M6 1h6l2 4H9l-3 8H3c-2 0-3-1.500-2.300-3.500L3 3C3.600 1.500 4.500 1 6 1z" fill="#2f8fe0"/><path d="M2 8l-1.300 1.500C0 11.500 1 13 3 13h3l2-5z" fill="#4fc06a"/><path d="M14 15H8l4-10h4.500c2 0 3 1.500 2.300 3.500L17 13.500c-.5 1-1.500 1.500-3 1.500z" fill="#d155a8"/><path d="M12 1l2 4h-3.500L9 9 8 5z" fill="#3f5fd0"/><rect x="5" y="13" width="15" height="6.500" rx="1.500" fill="#f5b72b"/><text x="6.600" y="18.400" font-size="5.500" font-weight="700" font-family="Open Sans,sans-serif" fill="#3a2a00">PRE</text></svg>
</footer>

<svg class="cursor" width="11" height="17" viewBox="0 0 11 17"><path d="M2 1.500v11.500l2.800-2.300 1.600 3.800 1.600-.7-1.500-3.700h3z" fill="#fff" fill-opacity=".8" stroke="#555" stroke-width=".8"/></svg>

<div class="share d-flex align-items-center"><span style="width:4px;height:9px;border:solid #d0d0d0;border-width:0 1.500px"></span><span style="margin-left:8px">app.clipchamp.com is sharing your screen.</span><div class="stop d-flex align-items-center justify-content-center">Stop sharing</div><a href="#" style="margin-left:11px;color:#1d6fb8">Hide</a></div>
<script src="https://cdn.jsdelivr.net/npm/bootstrap@5.3.0/dist/js/bootstrap.bundle.min.js"></script>
</body>
</html>
